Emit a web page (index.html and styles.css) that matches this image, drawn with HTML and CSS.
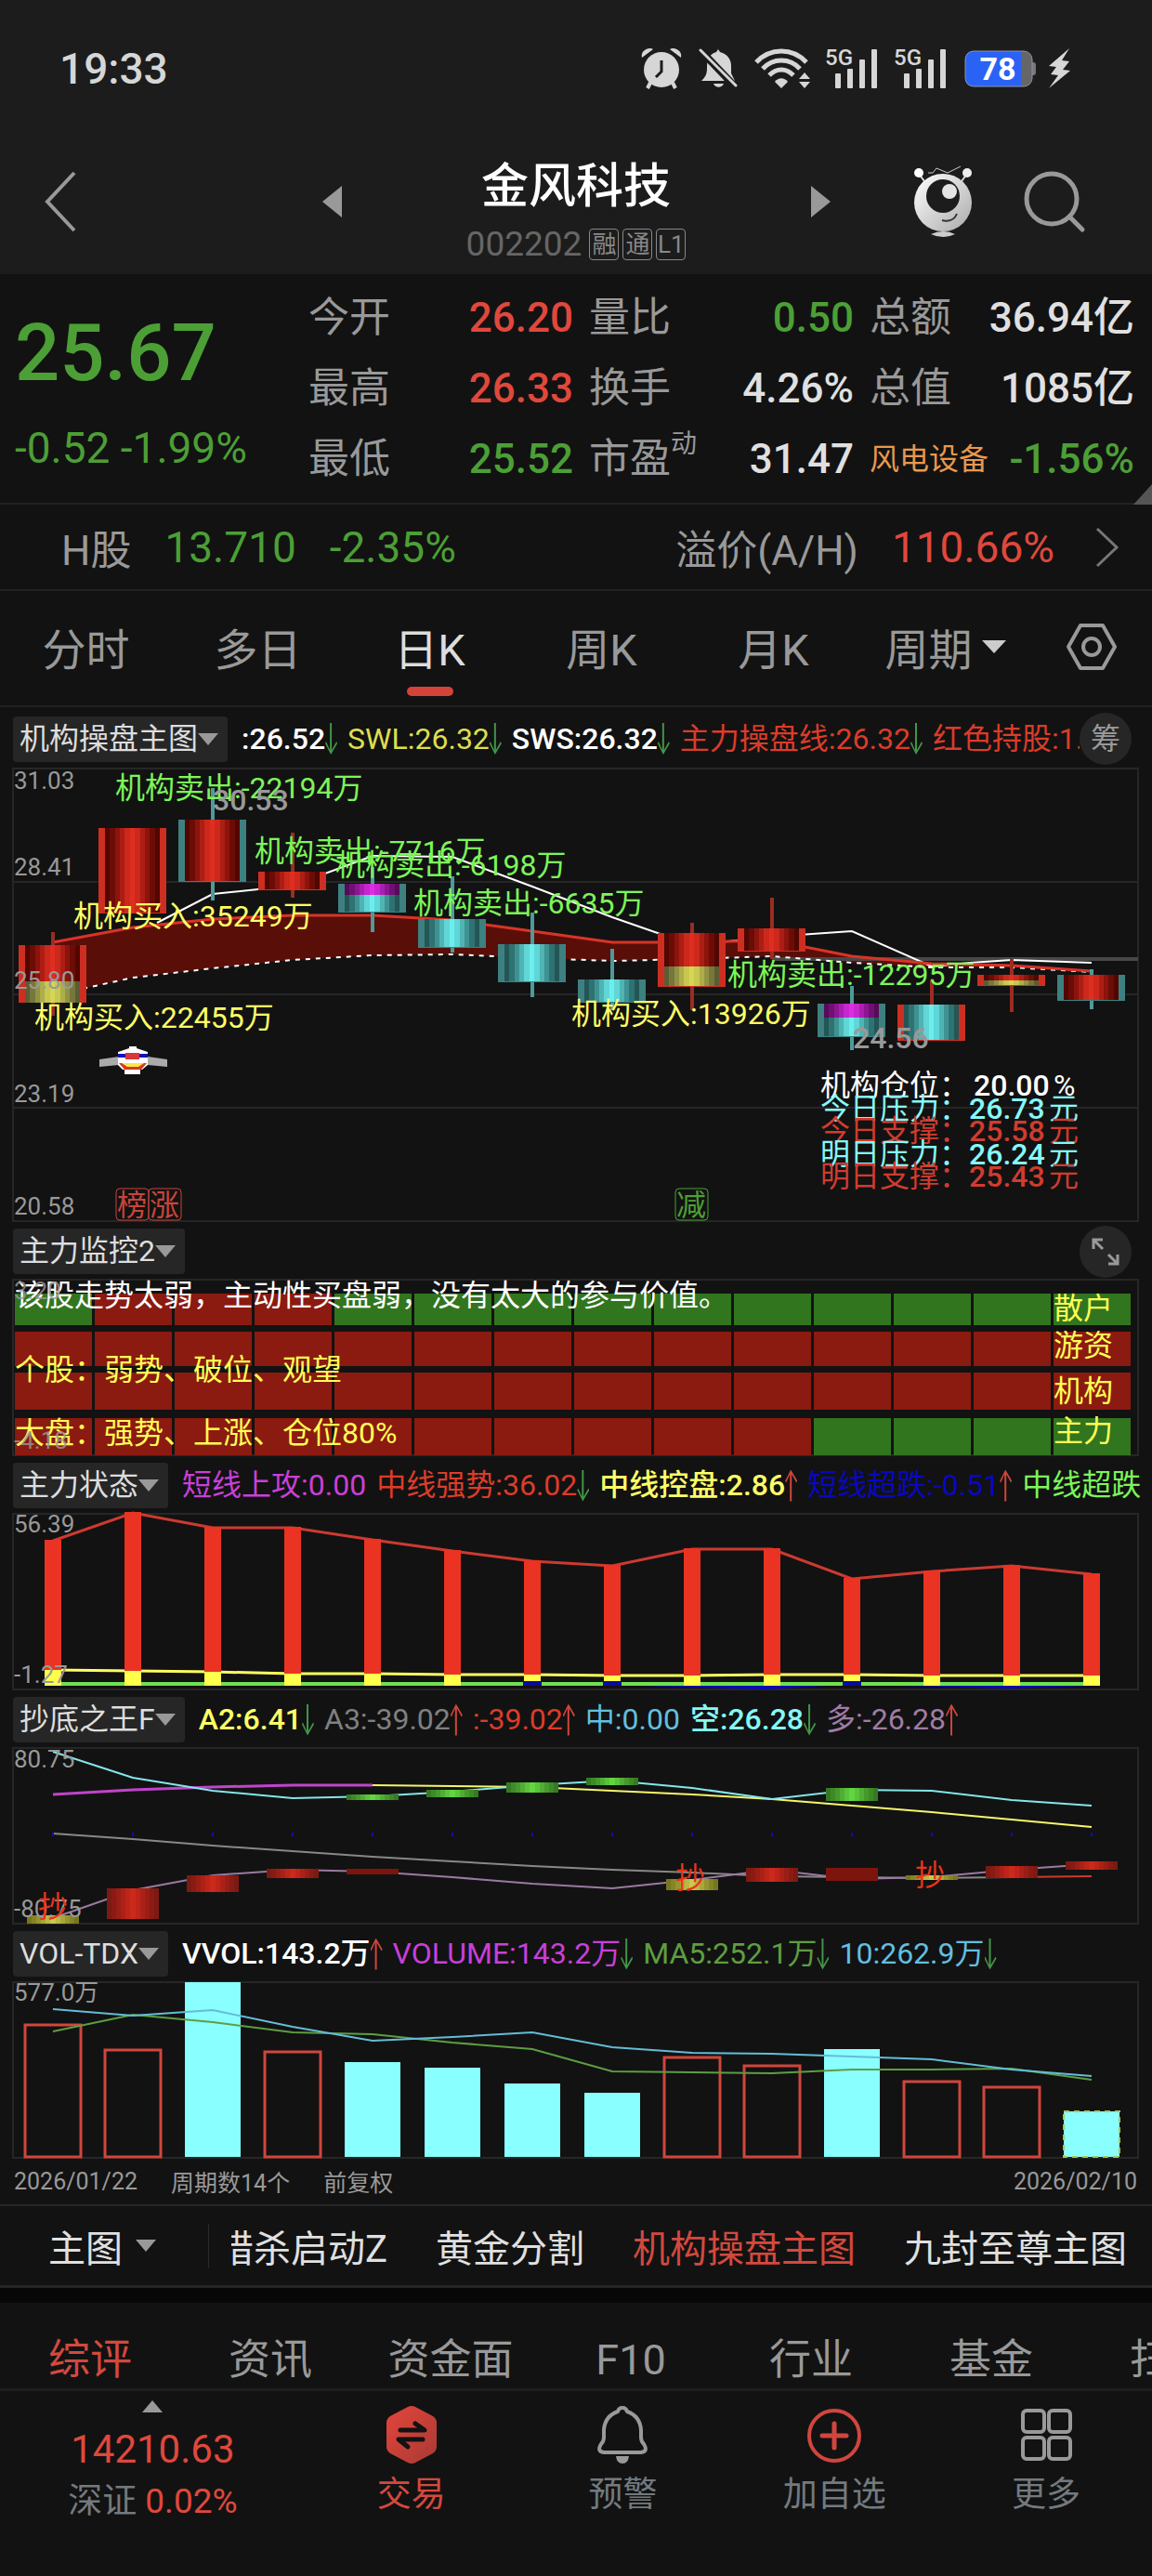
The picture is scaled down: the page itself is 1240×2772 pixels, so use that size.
FILE: index.html
```html
<!doctype html>
<html lang="zh-CN">
<head>
	<meta charset="utf-8">
	<meta name="viewport" content="width=device-width">
	<title>金风科技 002202</title>
	<link rel="stylesheet" href="styles.css">
</head>
<body>
<header class="top">
	<div class="status">
		<span class="time">19:33</span>
		<div class="status-icons">
			<svg width="44" height="46" viewBox="0 0 44 46" fill="#d6d6d6"><path d="M1 11C-1 4 8-1 13 2zM43 11C45 4 36-1 31 2z"/><path d="M10 38l-3 6M34 38l3 6" stroke="#d6d6d6" stroke-width="4"/><circle cx="22" cy="24" r="19"/><path d="M22 14v12l-6 6" fill="none" stroke="#1c1c1c" stroke-width="3"/></svg>
			<svg class="ml-bell" width="42" height="44" viewBox="0 0 42 44" fill="#d6d6d6"><path d="M19 4l2-3 2 3c8 2 12 8 12 15v8l4 8H3c6-6 6-9 6-16C9 12 12 6 19 4zM16 38h11c-2 5-9 5-11 0z"/><path d="M0 0l40 42" stroke="#1c1c1c" stroke-width="8"/><path d="M2 2l38 38" stroke="#d6d6d6" stroke-width="3" stroke-linecap="round"/></svg>
			<svg class="ml-wifi" width="60" height="44" viewBox="0 0 60 44" fill="none" stroke="#d6d6d6" stroke-width="5"><path d="M2 15C17-1 41-1 56 15M9 22C20 10 38 10 49 22M16 29C24 21 34 21 42 29"/><path d="M22 36c4-5 10-5 14 0l-7 7z" fill="#d6d6d6" stroke="none"/><path d="M54 26l6 7H48zM54 43l6-7H48z" fill="#d6d6d6" stroke="none"/></svg>
			<svg class="ml-cell" width="58" height="44" viewBox="0 0 58 44" fill="#d6d6d6"><text x="0" y="18" class="net">5G</text><rect x="11" y="27" width="6" height="16" rx="1"/><rect x="24" y="22" width="6" height="21" rx="1"/><rect x="37" y="12" width="6" height="31" rx="1"/><rect x="50" y="1" width="6" height="42" rx="1"/></svg>
			<svg class="ml-cell" width="58" height="44" viewBox="0 0 58 44" fill="#d6d6d6"><text x="0" y="18" class="net">5G</text><rect x="11" y="27" width="6" height="16" rx="1"/><rect x="24" y="22" width="6" height="21" rx="1"/><rect x="37" y="12" width="6" height="31" rx="1"/><rect x="50" y="1" width="6" height="42" rx="1"/></svg>
			<svg class="ml-batt" width="78" height="40" viewBox="0 0 78 40"><path d="M73 13h1q3 0 3 3v8q0 3-3 3h-1z" fill="#777"/><rect x="1" y="1" width="72" height="38" rx="9" fill="#666"/><path d="M10 1h51v38H10q-9 0-9-9V10q0-9 9-9z" fill="#2a62f5"/><rect x="1" y="1" width="72" height="38" rx="9" fill="none" stroke="#8a93a8"/><text x="36" y="32" text-anchor="middle" class="batt-num">78</text></svg>
			<svg class="ml-bolt" width="26" height="44" viewBox="0 0 26 44"><path d="M23 0L1 19l8 1-6 8 8 1L1 43l23-19-8-1 7-9-8-1z" fill="#d6d6d6"/></svg>
		</div>
	</div>
	<div class="title-bar">
		<div class="title-left">
			<a href="#" aria-label="返回"><svg width="36" height="66" viewBox="0 0 36 66" fill="none" stroke="#999" stroke-width="4"><path d="M33 2L4 33l29 31"/></svg></a>
			<a href="#" aria-label="上一只"><svg width="21" height="34" viewBox="0 0 21 34" fill="#999"><path d="M21 0v34L0 17z"/></svg></a>
		</div>
		<div class="title-mid">
			<h1>金风科技</h1>
			<div class="code"><span>002202</span><i>融</i><i>通</i><i>L1</i></div>
		</div>
		<div class="title-right">
			<a href="#" aria-label="下一只"><svg width="21" height="34" viewBox="0 0 21 34" fill="#999"><path d="M0 0v34l21-17z"/></svg></a>
			<a class="robot" href="#" aria-label="小达">
				<svg width="62" height="78" viewBox="0 0 62 78"><defs><linearGradient id="rb" x1="0" y1="0" x2="1" y2="1"><stop offset="0" stop-color="#fff"/><stop offset="1" stop-color="#aaa"/></linearGradient></defs><path d="M15 8h5l4-5 12 5 14-7" fill="none" stroke="#ccc" stroke-width="1"/><path d="M5 9l9 12M57 9l-9 12" stroke="#ddd" stroke-width="2"/><circle cx="5" cy="8" r="5" fill="#fff"/><circle cx="57" cy="8" r="5" fill="#eee"/><circle cx="31" cy="40" r="31" fill="url(#rb)"/><circle cx="31" cy="33" r="18" fill="#1c1c1c"/><circle cx="38" cy="28" r="8" fill="#e4e4e4"/><path d="M30 59q12 3 16-7" fill="none" stroke="#333" stroke-width="2"/><path d="M18 74q13-6 26 0-13 6-26 0z" fill="#ccc"/></svg>
			</a>
			<a href="#" aria-label="搜索"><svg width="66" height="66" viewBox="0 0 66 66" fill="none" stroke="#999" stroke-width="5"><circle cx="30" cy="30" r="27"/><path d="M49 49l14 14" stroke-linecap="round"/></svg></a>
		</div>
	</div>
</header>

<section class="quote">
	<div class="price">
		<strong>25.67</strong>
		<span>-0.52 -1.99%</span>
	</div>
	<dl class="stats">
		<div><dt>今开</dt><dd class="red">26.20</dd></div>
		<div><dt>量比</dt><dd class="green">0.50</dd></div>
		<div><dt>总额</dt><dd>36.94亿</dd></div>
		<div><dt>最高</dt><dd class="red">26.33</dd></div>
		<div><dt>换手</dt><dd>4.26%</dd></div>
		<div><dt>总值</dt><dd>1085亿</dd></div>
		<div><dt>最低</dt><dd class="green">25.52</dd></div>
		<div><dt>市盈<sup>动</sup></dt><dd>31.47</dd></div>
		<div><dt class="sector">风电设备</dt><dd class="green">-1.56%</dd></div>
	</dl>
	<svg class="corner" width="20" height="22" viewBox="0 0 20 22"><path d="M20 0v22H0z" fill="#555"/></svg>
</section>

<a class="hshare" href="#">
	<span>H股</span><b class="green">13.710</b><b class="green">-2.35%</b>
	<span class="premium">溢价(A/H)</span><b class="red">110.66%</b>
	<svg width="26" height="44" viewBox="0 0 26 44" fill="none" stroke="#777" stroke-width="3"><path d="M2 2l21 20L2 42"/></svg>
</a>

<nav class="periods">
	<a href="#">分时</a>
	<a href="#">多日</a>
	<a href="#" class="on">日K</a>
	<a href="#">周K</a>
	<a href="#">月K</a>
	<a href="#">周期<svg width="26" height="14" viewBox="0 0 26 14" fill="#ccc"><path d="M0 0h26L13 14z"/></svg></a>
	<a href="#" aria-label="设置"><svg width="54" height="50" viewBox="0 0 54 50" fill="none" stroke="#999" stroke-width="4"><path d="M15 2h24l13 23-13 23H15L2 25z" stroke-linejoin="round"/><circle cx="27" cy="25" r="9"/></svg></a>
</nav>

<main>
	<section class="panel">
		<div class="head head-main">
			<button class="chip">机构操盘主图<i class="tri"></i></button>
			<div class="values">
				<span class="c-white dn">:26.52</span>
				<span class="c-gold dn">SWL:26.32</span>
				<span class="c-white dn">SWS:26.32</span>
				<span class="c-red dn">主力操盘线:26.32</span>
				<span class="c-red">红色持股:1.</span>
			</div>
			<button class="round">筹</button>
		</div>
		<svg class="chart" id="kline" viewBox="0 0 1240 487"></svg>
	</section>

	<section class="panel">
		<div class="head">
			<button class="chip">主力监控2<i class="tri"></i></button>
			<button class="round" aria-label="展开"><svg width="32" height="32" viewBox="0 0 32 32" fill="none" stroke="#999" stroke-width="3"><path d="M3 13V3h10M3 3l10 10M29 19v10H19M29 29L19 19"/></svg></button>
		</div>
		<svg class="chart" id="monitor" viewBox="0 0 1240 189"></svg>
	</section>

	<section class="panel">
		<div class="head">
			<button class="chip">主力状态<i class="tri"></i></button>
			<div class="values">
				<span class="c-pink">短线上攻:0.00</span>
				<span class="c-red dn">中线强势:36.02</span>
				<span class="c-yellow up">中线控盘:2.86</span>
				<span class="c-blue up">短线超跌:-0.51</span>
				<span class="c-lime">中线超跌</span>
			</div>
		</div>
		<svg class="chart" id="state" viewBox="0 0 1240 189"></svg>
	</section>

	<section class="panel">
		<div class="head">
			<button class="chip">抄底之王F<i class="tri"></i></button>
			<div class="values">
				<span class="c-yellow dn">A2:6.41</span>
				<span class="c-grey up">A3:-39.02</span>
				<span class="c-red up">:-39.02</span>
				<span class="c-sky">中:0.00</span>
				<span class="c-cyan dn">空:26.28</span>
				<span class="c-purple up">多:-26.28</span>
			</div>
		</div>
		<svg class="chart" id="bottom" viewBox="0 0 1240 189"></svg>
	</section>

	<section class="panel">
		<div class="head">
			<button class="chip">VOL-TDX<i class="tri"></i></button>
			<div class="values">
				<span class="c-white up">VVOL:143.2万</span>
				<span class="c-pink dn">VOLUME:143.2万</span>
				<span class="c-leaf dn">MA5:252.1万</span>
				<span class="c-sky dn">10:262.9万</span>
			</div>
		</div>
		<svg class="chart" id="volume" viewBox="0 0 1240 189"></svg>
	</section>
	<div class="dates"><span>2026/01/22</span><span>周期数14个</span><span>前复权</span><span class="end">2026/02/10</span></div>
</main>

<div class="templates">
	<button class="main-pick">主图<i class="tri"></i></button>
	<div class="scroller">
		<a href="#">猎杀启动Z</a>
		<a href="#">黄金分割</a>
		<a href="#" class="on">机构操盘主图</a>
		<a href="#">九封至尊主图</a>
	</div>
</div>

<nav class="info">
	<a href="#" class="on">综评</a>
	<a href="#">资讯</a>
	<a href="#">资金面</a>
	<a href="#">F10</a>
	<a href="#">行业</a>
	<a href="#">基金</a>
	<a href="#">扫雷</a>
</nav>

<footer class="bar">
	<a class="index" href="#">
		<svg width="22" height="13" viewBox="0 0 22 13" fill="#999"><path d="M11 0l11 13H0z"/></svg>
		<b>14210.63</b>
		<span>深证 <em>0.02%</em></span>
	</a>
	<a href="#" class="on">
		<svg width="60" height="62" viewBox="0 0 60 62"><defs><linearGradient id="tr" x1="0" y1="0" x2="1" y2="1"><stop offset="0" stop-color="#e4453b"/><stop offset="1" stop-color="#a83a34"/></linearGradient></defs><path d="M26 1q4-2 8 0l19 10q4 3 4 7v26q0 4-4 7L34 61q-4 2-8 0L7 51q-4-3-4-7V18q0-4 4-7z" fill="url(#tr)"/><path d="M18 26h26L34 19M42 36H16l10 8" fill="none" stroke="#121212" stroke-width="5" stroke-linecap="round" stroke-linejoin="round"/></svg>
		<span>交易</span>
	</a>
	<a href="#">
		<svg width="60" height="62" viewBox="0 0 60 62" fill="none" stroke="#999" stroke-width="4" stroke-linejoin="round"><path d="M30 2q4 0 5 4 14 5 15 20v8q0 4 3 7 5 8-3 9H10q-8-1-3-9 3-3 3-7v-8Q11 11 25 6q1-4 5-4z"/><path d="M23 54h14q-1 8-7 8t-7-8z" fill="#999" stroke="none"/></svg>
		<span>预警</span>
	</a>
	<a href="#">
		<svg width="60" height="62" viewBox="0 0 60 62" fill="none" stroke="#d0463e" stroke-width="4"><circle cx="30" cy="32" r="27"/><path d="M17 32h26M30 19v26" stroke-linecap="round" stroke-width="5"/></svg>
		<span>加自选</span>
	</a>
	<a href="#">
		<svg width="60" height="62" viewBox="0 0 60 62" fill="none" stroke="#999" stroke-width="4"><rect x="5" y="5" width="23" height="23" rx="4"/><rect x="33" y="5" width="23" height="23" rx="4"/><rect x="5" y="34" width="23" height="23" rx="4"/><rect x="33" y="34" width="23" height="23" rx="4"/></svg>
		<span>更多</span>
	</a>
</footer>
<script src="charts.js"></script>
</body>
</html>
```
FILE: styles.css
```css
*{margin:0;padding:0;box-sizing:border-box;}
body{background:#121212;color:#e0e0e0;font-family:Roboto,"Noto Sans CJK SC",sans-serif;overflow-x:hidden;}
a{color:inherit;text-decoration:none;}
button{font:inherit;color:inherit;border:0;background:none;cursor:pointer;}
i,em{font-style:normal;}
svg{display:block;flex:none;overflow:visible;}
.red{color:#e0483c;}
.green{color:#4c9f35;}

/* 顶部 */
.top{background:#1c1c1c;height:295px;}
.status{display:flex;justify-content:space-between;align-items:center;height:148px;padding:0 86px 0 64px;}
.time{font-size:46px;font-weight:500;color:#d6d6d6;}
.status-icons{display:flex;align-items:center;}
.ml-bell,.ml-wifi,.ml-batt{margin-left:18px;}
.ml-cell{margin-left:16px;}
.ml-bolt{margin-left:12px;}
.net{font-size:24px;font-weight:500;}
.batt-num{font-size:34px;font-weight:700;fill:#fff;}
.title-bar{display:grid;grid-template-columns:1fr 505px 1fr;height:138px;align-items:center;}
.title-left,.title-right{display:flex;align-items:center;}
.title-left{justify-content:space-between;padding-left:47px;}
.title-right{padding-right:72px;gap:56px;}
.robot{margin-left:auto;}
.title-mid{display:flex;flex-direction:column;align-items:center;gap:12px;padding-top:20px;}
h1{font-size:51px;line-height:60px;font-weight:500;color:#fff;}
.code{display:flex;align-items:center;gap:4px;font-size:37px;line-height:40px;color:#666;}
.code span{margin-right:4px;}
.code i{width:32px;height:34px;border:1px solid #888;border-radius:4px;font-size:26px;line-height:32px;text-align:center;color:#888;}

/* 报价 */
.quote{position:relative;display:flex;padding:9px 19px 9px 16px;border-bottom:2px solid #222;}
.price{width:316px;flex:none;color:#4c9f35;display:flex;flex-direction:column;}
.price strong{font-size:85px;font-weight:500;line-height:100px;margin-top:26px;}
.price span{font-size:46px;line-height:52px;margin-top:26px;}
.stats{flex:1;display:grid;grid-template-columns:repeat(3,1fr);column-gap:17px;}
.stats div{display:flex;justify-content:space-between;align-items:center;height:76px;font-size:44px;line-height:60px;white-space:nowrap;}
.stats dt{color:#999;}
.stats dd{font-weight:500;}
.stats sup{font-size:28px;line-height:28px;vertical-align:22px;}
.stats .sector{font-size:32px;color:#e8984e;}
.corner{position:absolute;right:0;bottom:-2px;}
.hshare{display:flex;align-items:center;height:93px;padding:0 35px 0 66px;border-bottom:2px solid #222;font-size:44px;color:#999;}
.hshare b{font-weight:400;font-size:46px;margin-left:36px;}
.hshare .premium{margin-left:auto;}
.hshare svg{margin-left:44px;}

/* 周期 */
.periods{display:grid;grid-template-columns:repeat(6,185fr) 130fr;height:125px;border-bottom:2px solid #222;font-size:47px;color:#999;}
.periods a{display:flex;align-items:center;justify-content:center;gap:10px;position:relative;padding-bottom:4px;}
.periods .on{color:#ddd;}
.periods .on::after{content:"";position:absolute;left:50%;bottom:10px;width:50px;height:10px;margin-left:-25px;border-radius:5px;background:#d3433a;}

/* 指标 */
.head{display:flex;align-items:center;height:63px;padding:2px 22px 0 14px;font-size:32px;line-height:49px;white-space:nowrap;}
.head-main{height:66px;}
.chip{display:flex;align-items:center;height:49px;padding:0 10px 0 7px;border-radius:4px;background:#262626;color:#ddd;}
.tri{border:11px solid transparent;border-top:13px solid #999;border-bottom:0;}
.values{flex:1;display:flex;gap:11px;margin-left:15px;overflow:hidden;}
.values span{display:flex;align-items:center;flex:none;}
.panel:not(:first-child) .values{margin-right:-22px;}
.values .up::after,.values .dn::after{content:"";width:13px;height:34px;background:#419547;clip-path:polygon(5px 0,7px 0,7px 29px,12px 20px,13px 22px,6px 34px,0 22px,1px 20px,5px 29px);}
.values .up::after{background:#d0463a;clip-path:polygon(5px 34px,7px 34px,7px 5px,12px 14px,13px 12px,6px 0,0 12px,1px 14px,5px 5px);}
.round{display:flex;align-items:center;justify-content:center;flex:none;width:56px;height:56px;border-radius:50%;background:#262626;color:#999;margin-left:auto;}
.c-white{color:#fff;font-weight:500;}
.c-gold{color:#dede50;}
.c-red{color:#dc3c2a;}
.c-pink{color:#c840d8;}
.c-yellow{color:#ffff66;font-weight:500;}
.c-blue{color:#0808c0;}
.c-lime{color:#7df55a;}
.c-grey{color:#808080;}
.c-sky{color:#62bfe0;}
.c-cyan{color:#86f8f8;font-weight:500;}
.c-purple{color:#a07ca6;}
.c-leaf{color:#5d9e40;}
.chart{width:100%;height:auto;font-size:32px;}
.chart .axis{font-size:26px;fill:#999;}
.chart .peak{fill:#999;font-weight:500;}
.chart .num{font-weight:500;}
.chart .mark{font-size:32px;text-anchor:middle;}
.dates{display:flex;gap:36px;padding:0 16px 0 15px;height:50px;align-items:center;font-size:25px;color:#999;}
.dates .end{margin-left:auto;}

/* 模板 */
.templates{display:flex;align-items:center;height:90px;border-top:2px solid #262626;border-bottom:3px solid #262626;font-size:40px;white-space:nowrap;}
.main-pick{display:flex;align-items:center;flex:none;height:48px;padding:0 56px 0 52px;border-right:1px solid #2a2a2a;}
.main-pick .tri{margin-left:14px;}
.scroller{flex:1;display:flex;gap:52px;margin-left:24px;overflow:hidden;}
.scroller a:first-child{margin-left:-16px;}
.templates .on,.info .on{color:#d3493e;}

/* 底部 */
.info{display:flex;height:111px;padding-top:30px;border-top:16px solid #070707;border-bottom:3px solid #1e1e1e;font-size:45px;line-height:64px;color:#999;overflow:hidden;}
.info a{flex:0 0 194px;text-align:center;white-space:nowrap;}
.bar{display:grid;grid-template-columns:329fr repeat(4,228fr);height:199px;color:#727a7f;font-size:37px;line-height:44px;}
.bar a{display:flex;flex-direction:column;align-items:center;gap:12px;padding-top:16px;}
.bar .on{color:#d3493e;}
.bar .index{padding-top:10px;gap:10px;}
.bar b{font-size:42px;font-weight:400;line-height:48px;color:#e0483c;margin-top:6px;}
.bar em{color:#e0483c;}
```
FILE: charts.js
```js
var STEP = 86, FIRST = 57, N = 14;

// 颜色由边到中心
var bands = {
	red: ['#520600', '#6c0c06', '#8c140c', '#ac1e14', '#cc281c', '#df2e20'],
	cyan: ['#235656', '#2f7272', '#3f9292', '#50b4b4', '#60d6d6', '#6ceeee'],
	yellow: ['#5c5c34', '#77773c', '#929244', '#adad4a', '#c8c850', '#d6d656'],
	pink: ['#560a58', '#701074', '#8c1692', '#aa1eb0', '#c826ce', '#de2ee4'],
	green: ['#357a22', '#3d8a27', '#46992d', '#4fae33', '#59c43a', '#61d640'],
	rust: ['#7c1a12', '#8a1b13', '#9a1e15', '#ac2117', '#be2519', '#cc291c'],
	olive: ['#77761f', '#858426', '#96942e', '#a8a638', '#bab844', '#cac850']
};

function cx(i){ return FIRST + i * STEP; }

function rect(x, y, w, h, fill, more){
	return '<rect x="' + x + '" y="' + y + '" width="' + w + '" height="' + h + '" fill="' + fill + '" ' + (more || '') + '/>';
}

function seg(x1, y1, x2, y2, color, w){
	return '<path d="M' + x1 + ' ' + y1 + 'L' + x2 + ' ' + y2 + '" stroke="' + color + '" stroke-width="' + w + '"/>';
}

function text(x, y, s, fill, cls){
	return '<text x="' + x + '" y="' + y + '"' + (fill ? ' fill="' + fill + '"' : '') + (cls ? ' class="' + cls + '"' : '') + '>' + s + '</text>';
}

// ys从第from根开始
function line(ys, color, w, from, more){
	var pts = ys.map(function(y, i){ return cx(i + (from || 0)) + ',' + y; }).join(' ');
	return '<polyline points="' + pts + '" fill="none" stroke="' + color + '" stroke-width="' + w + '" ' + (more || '') + '/>';
}

function gradients(){
	var s = '<defs>';
	for(var k in bands){
		var c = bands[k].concat(bands[k].slice(0, 5).reverse());
		s += '<linearGradient id="g-' + k + '">';
		c.forEach(function(col, i){
			s += '<stop offset="' + i / c.length + '" stop-color="' + col + '"/><stop offset="' + (i + 1) / c.length + '" stop-color="' + col + '"/>';
		});
		s += '</linearGradient>';
	}
	return s + '</defs>';
}

function frame(h){
	return rect(14, 0, 1211, h, 'none', 'stroke="#262626" stroke-width="2"');
}

function draw(id, s){ document.getElementById(id).innerHTML = s; }

function kline(){
	// 实体上 实体下 最高 最低 边框 填充 [附加色 上 下]
	var k = [
		[190, 252, 176, 266, 'r', 'red', 'yellow', 229, 252],
		[64, 156, 64, 156, 'r', 'red'],
		[55, 122, 21, 142, 't', 'red'],
		[111, 131, 69, 139, 'r', 'red'],
		[124, 155, 106, 176, 't', 'cyan', 'pink', 124, 136],
		[162, 193, 116, 198, 't', 'cyan'],
		[189, 230, 155, 246, 't', 'cyan'],
		[227, 252, 194, 260, 't', 'cyan'],
		[177, 235, 166, 260, 'r', 'red', 'yellow', 213, 234],
		[172, 197, 139, 205, 'r', 'red'],
		[253, 289, 234, 303, 't', 'cyan', 'pink', 253, 268],
		[254, 293, 228, 254, 'r', 'cyan'],
		[222, 234, 205, 262, 'r', 'red', 'yellow', 228, 233],
		[222, 250, 216, 259, 't', 'red']
	];
	var up = [187, 171, 162, 158, 158, 163, 175, 187, 187, 185, 202, 210, 212, 218];
	var low = [244, 225, 215, 206, 201, 200, 204, 207, 205, 202, 209, 214, 214, 219];
	var s = gradients() + frame(487);
	[122, 243, 365].forEach(function(y){ s += seg(14, y, 1225, y, '#262626', 2); });
	var area = up.map(function(y, i){ return cx(i) + ',' + y; }).concat(low.map(function(y, i){ return cx(i) + ',' + y; }).reverse());
	s += '<polygon points="' + area.join(' ') + '" fill="#5a0e08"/>';
	s += seg(831, 205, 1225, 205, '#484848', 4);
	s += '<polyline points="169,166 229,135 315,126 401,94 487,95 573,127 659,160 745,190 831,181 917,175 1003,213 1044,209 1089,206 1175,209" fill="none" stroke="#fff" stroke-width="2"/>';
	s += line(low, '#fff', 2, 0, 'stroke-dasharray="5 6"');
	s += line(up, '#d83428', 3);
	k.forEach(function(d, i){
		var x = cx(i), edge = d[4] == 'r' ? '#cc2f22' : '#3e8080';
		s += seg(x, d[2], x, d[3], d[4] == 'r' ? '#9c2c22' : '#4e9a9a', 4);
		s += rect(x - 37, d[0], 73, d[1] - d[0], edge);
		s += rect(x - 30, d[0], 59, d[1] - d[0] - 1, 'url(#g-' + d[5] + ')');
		if(d[6]) s += rect(x - 30, d[7], 59, d[8] - d[7], 'url(#g-' + d[6] + ')');
	});
	// 飞机
	s += '<path d="M107 313l21-3h31l21 3v8l-21-2h-31l-21 2z" fill="#aaa"/>';
	s += '<path d="M139 299h8v2l12 4v14l-6 5h-2v5h-17v-5h-2l-5-5v-14l12-4z" fill="#fff"/>';
	s += rect(127, 307, 32, 4, '#1414b4') + rect(135, 306, 15, 7, '#d83838');
	s += '<path d="M128 317h30l-6 7h-18z" fill="#d83a20"/><path d="M131 317h24l-6 4h-12z" fill="#f8e84c"/>';
	[[22, '31.03'], [115, '28.41'], [237, '25.80'], [359, '23.19'], [480, '20.58']].forEach(function(a){ s += text(15, a[0], a[1], '', 'axis'); });
	[[124, 32, -22194], [274, 100, -7716], [361, 115, -6198], [445, 156, -6635], [783, 233, -12295]].forEach(function(a){
		s += text(a[0], a[1], '机构卖出:' + a[2] + '万', '#7df55a');
	});
	[[79, 170, 35249], [37, 279, 22455], [615, 275, 13926]].forEach(function(a){
		s += text(a[0], a[1], '机构买入:' + a[2] + '万', '#ffff66');
	});
	s += text(229, 45, '30.53', '', 'peak') + text(918, 301, '24.56', '', 'peak');
	[['机构仓位', '20.00', '%', '#fff'], ['今日压力', '26.73', '元', '#86f8f8'], ['今日支撑', '25.58', '元', '#d03c2e'], ['明日压力', '26.24', '元', '#86f8f8'], ['明日支撑', '25.43', '元', '#d03c2e']].forEach(function(a, i){
		var y = 352 + Math.round(i * 24.5);
		s += text(883, y, a[0] + '：', a[3]) + text(i ? 1043 : 1048, y, a[1], a[3], 'num') + text(i ? 1129 : 1134, y, a[2], a[3]);
	});
	[[125, '榜', '#c8443a'], [160, '涨', '#c8443a'], [727, '减', '#4c9f35']].forEach(function(a){
		s += rect(a[0], 452, 35, 34, 'none', 'rx="4" stroke="' + a[2] + '"') + text(a[0] + 17, 481, a[1], a[2], 'mark');
	});
	draw('kline', s);
}

function monitor(){
	var rows = [[15, 34, 'grrrgggggggggg'], [56, 37, 'rrrrrrrrrrrrrr'], [100, 40, 'rrrrrrrrrrrrrr'], [149, 40, 'rrrrrrrrrrgggg']];
	var s = frame(189);
	rows.forEach(function(r){
		for(var i = 0; i < N; i++) s += rect(cx(i) - 41, r[0], 83, r[1], r[2][i] == 'g' ? '#32751f' : '#8b1a10');
	});
	s += text(16, 28, '该股走势太弱，主动性买盘弱，没有太大的参与价值。', '#fff');
	s += text(16, 108, '个股：弱势、破位、观望', '#ffff55') + text(16, 176, '大盘：强势、上涨、仓位80%', '#ffff55');
	s += text(1134, 42, '散户', '#ffff55') + text(1134, 82, '游资', '#ffff55') + text(1134, 131, '机构', '#ffff55') + text(1134, 174, '主力', '#ffff55');
	s += '<g opacity=".8">' + text(15, 21, '3.20', '', 'axis') + text(15, 182, '-4.18', '', 'axis') + '</g>';
	draw('monitor', s);
}

function state(){
	var top = [28, -2, 14, 14, 27, 39, 50, 55, 37, 37, 69, 61, 55, 64];
	var mid = [168, 169, 170, 172, 172, 173, 173, 174, 174, 173, 173, 174, 174, 174];
	var s = frame(189);
	s += line(top.map(function(y){ return y + 1; }), '#cc3a30', 3);
	s += '<path d="M690 185h200l-65 4zM965 185h210l-90 3z" fill="#0a0ab4"/>';
	s += seg(57, 183, 1175, 183, '#70e050', 4) + line(mid, '#ffff60', 3);
	top.forEach(function(y, i){
		s += rect(cx(i) - 9, y, 18, mid[i] - y, '#ea3323');
		s += rect(cx(i) - 9, mid[i], 18, 185 - mid[i], '#ffff4c');
		if(i == 6 || i == 7 || i == 10) s += rect(cx(i) - 10, 180, 20, 5, '#0a0aa0');
	});
	s += text(15, 20, '56.39', '', 'axis') + text(15, 182, '-1.27', '', 'axis');
	draw('state', s);
}

function bottom(){
	var boxes = [
		[0, 180, 189, 'olive'], [1, 151, 184, 'rust'], [2, 137, 155, 'rust'], [3, 130, 140, 'rust'],
		[4, 50, 56, 'green'], [5, 45, 53, 'green'], [6, 37, 48, 'green'], [7, 32, 40, 'green'],
		[8, 141, 153, 'olive'], [9, 129, 144, 'rust'], [10, 43, 57, 'green'], [11, 137, 142, 'olive'],
		[12, 127, 140, 'rust'], [13, 122, 131, 'rust']
	];
	var s = frame(189);
	s += line([50, 45, 42, 40, 40], '#c044cc', 3) + line([40, 41, 42, 46, 50, 55, 62, 69, 77, 85], '#f6f66a', 2, 4);
	s += line([4, 32, 46, 54, 52, 47, 40, 35, 43, 55, 45, 46, 56, 62], '#84e6ea', 2);
	s += line([92, 98, 105, 111, 117, 122, 127, 131, 134, 138, 139, 140, 139], '#888', 2) + line([139, 138], '#cc3a30', 2, 12);
	s += line([183, 153, 137, 131, 133, 139, 146, 151, 142, 131, 141, 139, 131, 125], '#9a7aa0', 2);
	for(var i = 0; i < N; i++) s += seg(cx(i), 91, cx(i), 95, '#0a0ac8', 2);
	boxes.forEach(function(b){ s += rect(cx(b[0]) - 28, b[1], 56, b[2] - b[1], 'url(#g-' + b[3] + ')'); });
	s += rect(373, 130, 56, 6, '#7c150e') + rect(889, 129, 56, 14, '#7c150e');
	s += text(15, 21, '80.75', '', 'axis') + text(15, 182, '-80.75', '', 'axis');
	s += text(57, 182, '抄', '#e8341c', 'mark') + text(743, 151, '抄', '#e8341c', 'mark') + text(1001, 148, '抄', '#e8341c', 'mark');
	draw('bottom', s);
}

function volume(){
	var top = [46, 73, 0, 75, 86, 92, 109, 119, 81, 90, 72, 107, 113, 139];
	var hollow = [0, 1, 3, 8, 9, 11, 12];
	var s = frame(189);
	top.forEach(function(y, i){
		if(hollow.indexOf(i) > -1) s += rect(cx(i) - 30, y, 60, 188 - y, 'none', 'stroke="#d0463c" stroke-width="3"');
		else s += rect(cx(i) - 30, y, 60, 188 - y, '#8affff', i == 13 ? 'stroke="#a8c850" stroke-width="2" stroke-dasharray="6 5"' : '');
	});
	s += line([53, 35, 43, 54, 56, 65, 72, 96, 97, 98, 94, 94, 93, 105], '#5c9e42', 2);
	s += line([29, 36, 30, 48, 63, 59, 54, 70, 76, 77, 80, 83, 94, 101], '#64bcd8', 2);
	s += text(15, 20, '577.0万', '', 'axis');
	draw('volume', s);
}

kline();
monitor();
state();
bottom();
volume();
```
